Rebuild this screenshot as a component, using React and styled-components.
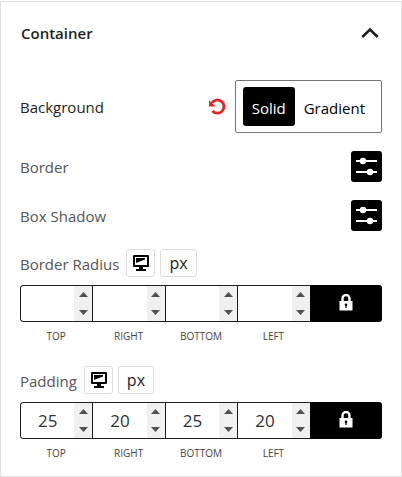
import React, { useState } from "react";
import styled, { createGlobalStyle } from "styled-components";

const GlobalStyle = createGlobalStyle`
  * {
    box-sizing: border-box;
  }

  body {
    margin: 0;
    background: #fff;
    font-family: "Open Sans", "Noto Sans", sans-serif;
    font-size: 15px;
    line-height: 20px;
    color: #1e1e1e;
  }

  button,
  input {
    font: inherit;
    margin: 0;
    padding: 0;
  }

  button {
    cursor: pointer;
  }
`;

const Panel = styled.section`
  margin-top: 1px;
  padding: 0 19px 13px;
  border: 1px solid #e0e0e0;
`;

const PanelTitle = styled.h2`
  margin: 0;
  font-size: 15px;
`;

const PanelToggle = styled.button`
  display: flex;
  align-items: center;
  justify-content: space-between;
  width: 100%;
  height: 60px;
  padding: 2px 3px 0 1px;
  border: none;
  background: none;
  color: #1e1e1e;
  font-weight: 600;
`;

const Row = styled.div`
  display: flex;
  align-items: center;
  justify-content: space-between;
  margin-top: 18px;
`;

const Label = styled.span`
  color: ${(props) => (props.$strong ? "#1e1e1e" : "#555")};
`;

const Controls = styled.div`
  display: flex;
  align-items: center;
  gap: 9px;
`;

const ResetButton = styled.button`
  display: flex;
  border: none;
  background: none;
  color: #e52521;
`;

const ButtonGroup = styled.div`
  display: flex;
  padding: 6px 7px;
  border: 1px solid #757575;
  border-radius: 2px;
`;

const GroupButton = styled.button`
  height: 39px;
  padding: 2px 9px 0;
  border: none;
  border-radius: 3px;
  background: ${(props) => (props.$active ? "#000" : "transparent")};
  color: ${(props) => (props.$active ? "#fff" : "#000")};
`;

const SettingsButton = styled.button`
  display: flex;
  align-items: center;
  justify-content: center;
  width: 31px;
  height: 31px;
  border: none;
  border-radius: 3px;
  background: #000;
  color: #fff;
`;

const Dimensions = styled.div`
  margin-top: ${(props) => props.$gap}px;
`;

const DimensionsHeader = styled.div`
  display: flex;
  align-items: center;
  gap: 5px;
  margin-bottom: 8px;

  ${Label} {
    margin-right: 2px;
    padding-top: 2px;
  }
`;

const SmallButton = styled.button`
  display: flex;
  align-items: center;
  justify-content: center;
  height: 28px;
  padding: 0 ${(props) => (props.$text ? 8 : 5)}px;
  border: 1px solid #ddd;
  border-radius: 3px;
  background: #fff;
  color: ${(props) => (props.$text ? "#1e1e1e" : "#000")};
  font-size: 16px;
`;

const Columns = styled.div`
  display: grid;
  grid-template-columns: repeat(5, 1fr);
`;

const Fields = styled(Columns)`
  height: 37px;
  border-radius: 3px;
  overflow: hidden;
`;

const Field = styled.div`
  display: flex;
  min-width: 0;
  border: 1px solid #1e1e1e;
  border-right: none;

  &:first-child {
    border-radius: 3px 0 0 3px;
  }
`;

const NumberInput = styled.input`
  flex: 1;
  min-width: 0;
  border: none;
  outline: none;
  background: transparent;
  color: #2c3338;
  font-size: 17px;
  text-align: center;
  appearance: textfield;

  &::-webkit-inner-spin-button {
    display: none;
  }
`;

const Spinner = styled.div`
  display: flex;
  flex-direction: column;
  width: 18px;
  background: #f0f0f0;
`;

const SpinButton = styled.button`
  display: flex;
  flex: 1;
  align-items: center;
  justify-content: center;
  border: none;
  background: none;
  color: #505050;
`;

const LockButton = styled.button`
  display: flex;
  align-items: center;
  justify-content: center;
  padding-bottom: 2px;
  border: none;
  background: #000;
  color: #fff;
`;

const Caption = styled.label`
  padding-top: 4px;
  color: #444;
  font-size: 10px;
  text-align: center;
  text-transform: uppercase;
`;

const ChevronIcon = () => (
  <svg width="18" height="12" viewBox="0 0 18 12" fill="none" stroke="currentColor" strokeWidth="2.6">
    <path d="M1.3 10 9 2.6l7.7 7.4" />
  </svg>
);

const ResetIcon = () => (
  <svg width="18" height="18" viewBox="0 0 18 18" fill="none">
    <path d="M3.8 5A6.6 6.6 0 1 1 4.4 13" stroke="currentColor" strokeWidth="2.8" />
    <path d="M1 2.2v6.200h6.500z" fill="currentColor" />
  </svg>
);

const SlidersIcon = () => (
  <svg width="21" height="19" viewBox="0 0 21 19" fill="currentColor">
    <path d="M0 3h21v2H0zM0 14h21v2H0z" />
    <circle cx="7" cy="4" r="3.2" />
    <circle cx="14" cy="15" r="3.2" />
  </svg>
);

const DesktopIcon = () => (
  <svg width="17" height="16" viewBox="0 0 17 16" fill="currentColor">
    <path
      fillRule="evenodd"
      d="M2 0h14a1 1 0 0 1 1 1v10a1 1 0 0 1-1 1h-5v2h3v2H4v-2h3v-2H2a1 1 0 0 1-1-1V1a1 1 0 0 1 1-1zM3 2v8h12V2z"
    />
    <path d="M4 3h9v1.500L4 8z" />
  </svg>
);

const LockIcon = () => (
  <svg width="14" height="17" viewBox="0 0 14 17">
    <path d="M3.5 8V4.5a3.5 3.5 0 0 1 7 0V8" fill="none" stroke="currentColor" strokeWidth="2.4" />
    <path d="M.5 7h13v9.500H.5z" fill="currentColor" />
    <circle cx="7" cy="10.700" r="1.300" fill="#000" />
    <path d="M6.400 11h1.200v3H6.400z" fill="#000" />
  </svg>
);

const ArrowIcon = ({ down }) => (
  <svg width="9" height="5" viewBox="0 0 9 5" fill="currentColor">
    <path d={down ? "M0 0h9L4.500 5z" : "M0 5h9L4.500 0z"} />
  </svg>
);

const sides = ["Top", "Right", "Bottom", "Left"];

const DimensionControl = ({ id, label, initial, gap }) => {
  const [values, setValues] = useState(initial);
  const [locked, setLocked] = useState(true);

  const change = (index, value) => {
    setValues(values.map((old, i) => (i === index ? value : old)));
  };

  return (
    <Dimensions $gap={gap} role="group" aria-labelledby={`${id}-label`}>
      <DimensionsHeader>
        <Label id={`${id}-label`}>{label}</Label>
        <SmallButton type="button" aria-label="Desktop">
          <DesktopIcon />
        </SmallButton>
        <SmallButton type="button" $text>
          px
        </SmallButton>
      </DimensionsHeader>
      <Fields>
        {sides.map((side, i) => (
          <Field key={side}>
            <NumberInput
              id={`${id}-${side}`}
              type="number"
              value={values[i]}
              onChange={(e) => change(i, e.target.value)}
            />
            <Spinner>
              <SpinButton
                type="button"
                aria-label={`Increase ${side}`}
                onClick={() => change(i, Number(values[i]) + 1)}
              >
                <ArrowIcon />
              </SpinButton>
              <SpinButton
                type="button"
                aria-label={`Decrease ${side}`}
                onClick={() => change(i, Number(values[i]) - 1)}
              >
                <ArrowIcon down />
              </SpinButton>
            </Spinner>
          </Field>
        ))}
        <LockButton
          type="button"
          aria-label="Link sides"
          aria-pressed={locked}
          onClick={() => setLocked(!locked)}
        >
          <LockIcon />
        </LockButton>
      </Fields>
      <Columns>
        {sides.map((side) => (
          <Caption key={side} htmlFor={`${id}-${side}`}>
            {side}
          </Caption>
        ))}
      </Columns>
    </Dimensions>
  );
};

export default function App() {
  const [open, setOpen] = useState(true);
  const [background, setBackground] = useState("Solid");

  return (
    <>
      <GlobalStyle />
      <Panel>
        <PanelTitle>
          <PanelToggle type="button" aria-expanded={open} onClick={() => setOpen(!open)}>
            Container
            <ChevronIcon />
          </PanelToggle>
        </PanelTitle>
        {open && (
          <>
            <Row>
              <Label $strong>Background</Label>
              <Controls>
                <ResetButton type="button" aria-label="Reset" onClick={() => setBackground("Solid")}>
                  <ResetIcon />
                </ResetButton>
                <ButtonGroup>
                  {["Solid", "Gradient"].map((type) => (
                    <GroupButton
                      key={type}
                      type="button"
                      $active={background === type}
                      onClick={() => setBackground(type)}
                    >
                      {type}
                    </GroupButton>
                  ))}
                </ButtonGroup>
              </Controls>
            </Row>
            {["Border", "Box Shadow"].map((name) => (
              <Row key={name}>
                <Label>{name}</Label>
                <SettingsButton type="button" aria-label={`${name} settings`}>
                  <SlidersIcon />
                </SettingsButton>
              </Row>
            ))}
            <DimensionControl id="radius" label="Border Radius" initial={["", "", "", ""]} gap={18} />
            <DimensionControl id="padding" label="Padding" initial={[25, 20, 25, 20]} gap={20} />
          </>
        )}
      </Panel>
    </>
  );
}
